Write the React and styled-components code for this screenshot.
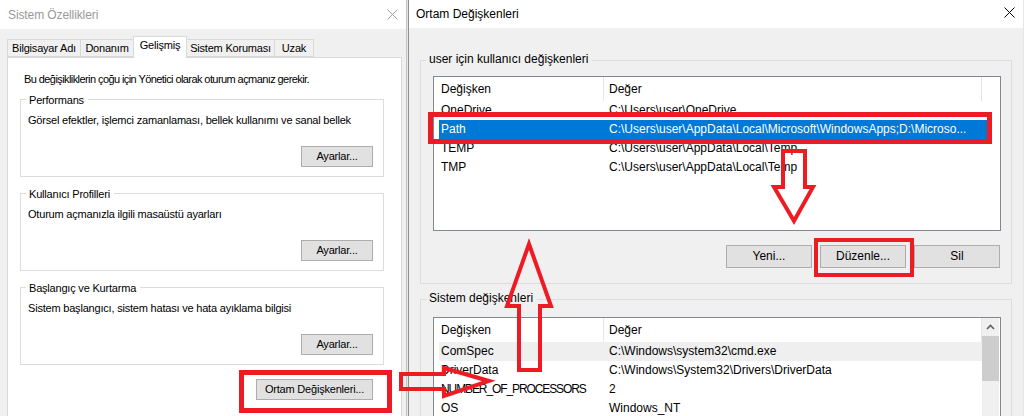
import React from 'react';
import styled, { createGlobalStyle } from 'styled-components';

const RED = '#ed1c24';

const userVars = [
  { name: 'OneDrive', value: 'C:\\Users\\user\\OneDrive' },
  {
    name: 'Path',
    value: 'C:\\Users\\user\\AppData\\Local\\Microsoft\\WindowsApps;D:\\Microso...',
    state: 'selected',
  },
  { name: 'TEMP', value: 'C:\\Users\\user\\AppData\\Local\\Temp' },
  { name: 'TMP', value: 'C:\\Users\\user\\AppData\\Local\\Temp' },
];

const systemVars = [
  { name: 'ComSpec', value: 'C:\\Windows\\system32\\cmd.exe', state: 'hover' },
  { name: 'DriverData', value: 'C:\\Windows\\System32\\Drivers\\DriverData' },
  { name: 'NUMBER_OF_PROCESSORS', value: '2', tight: true },
  { name: 'OS', value: 'Windows_NT' },
];

const tabs = [
  { label: 'Bilgisayar Adı', width: 74 },
  { label: 'Donanım', width: 54 },
  { label: 'Gelişmiş', width: 54, active: true },
  { label: 'Sistem Koruması', width: 89 },
  { label: 'Uzak', width: 40 },
];

const settingGroups = [
  {
    title: 'Performans',
    text: 'Görsel efektler, işlemci zamanlaması, bellek kullanımı ve sanal bellek',
  },
  { title: 'Kullanıcı Profilleri', text: 'Oturum açmanızla ilgili masaüstü ayarları' },
  {
    title: 'Başlangıç ve Kurtarma',
    text: 'Sistem başlangıcı, sistem hatası ve hata ayıklama bilgisi',
  },
];

const CloseIcon = ({ color }) => (
  <svg width="11" height="11" viewBox="0 0 11 11">
    <path d="M0.5 0.5L10.5 10.5M10.5 0.5L0.5 10.5" stroke={color} strokeWidth="1" fill="none" />
  </svg>
);

const VarList = ({ rows, height, scroll }) => (
  <ListBox $h={height}>
    <ListMain>
      <HeaderRow>
        <HeaderCell $w={170} $pad={7}>Değişken</HeaderCell>
        <HeaderCell $w={378} $pad={5}>Değer</HeaderCell>
      </HeaderRow>
      {rows.map((r) => (
        <Row key={r.name} $state={r.state} $mr={scroll ? 0 : 13}>
          <NameCell $tight={r.tight}>{r.name}</NameCell>
          <ValueCell>{r.value}</ValueCell>
        </Row>
      ))}
    </ListMain>
    {scroll && (
      <ScrollBar>
        <ScrollArrow>
          <svg width="9" height="6" viewBox="0 0 9 6">
            <path d="M1 5L4.5 1.5L8 5" stroke="#606060" strokeWidth="1.6" fill="none" />
          </svg>
        </ScrollArrow>
        <Thumb />
      </ScrollBar>
    )}
  </ListBox>
);

const App = () => (
  <>
    <GlobalStyle />
    <Screen>
      <LeftWindow>
        <TitleBar $h={29}>
          <LeftTitle>Sistem Özellikleri</LeftTitle>
          <CloseIcon color="#a0a0a0" />
        </TitleBar>
        <LeftBody>
          <TabStrip>
            {tabs.map((t) => (
              <Tab key={t.label} $w={t.width} $active={t.active}>
                {t.label}
              </Tab>
            ))}
          </TabStrip>
          <Panel>
            <Intro>Bu değişikliklerin çoğu için Yönetici olarak oturum açmanız gerekir.</Intro>
            {settingGroups.map((g) => (
              <SettingGroup key={g.title}>
                <Legend $top={-7} $left={5} $bg="#fff">
                  {g.title}
                </Legend>
                <Desc>{g.text}</Desc>
                <ButtonRow>
                  <Button $w={72} $h={21}>
                    Ayarlar...
                  </Button>
                </ButtonRow>
              </SettingGroup>
            ))}
            <FooterRow>
              <Button $w={117} $h={21}>
                Ortam Değişkenleri...
              </Button>
            </FooterRow>
          </Panel>
        </LeftBody>
      </LeftWindow>

      <RightWindow>
        <TitleBar $h={28}>
          <RightTitle>Ortam Değişkenleri</RightTitle>
          <CloseSlot>
            <CloseIcon color="#000" />
          </CloseSlot>
        </TitleBar>
        <RightBody>
          <VarGroup $pt={15} $pb={15}>
            <Legend $top={-9} $left={5} $bg="#f0f0f0">
              user için kullanıcı değişkenleri
            </Legend>
            <VarList rows={userVars} height={155} />
            <ActionRow>
              <Button $w={86} $h={23}>
                Yeni...
              </Button>
              <Button $w={86} $h={23}>
                Düzenle...
              </Button>
              <Button $w={86} $h={23}>
                Sil
              </Button>
            </ActionRow>
          </VarGroup>
          <VarGroup $pt={17} $pb={0} $mt={15}>
            <Legend $top={-9} $left={5} $bg="#f0f0f0">
              Sistem değişkenleri
            </Legend>
            <VarList rows={systemVars} height={160} scroll />
          </VarGroup>
        </RightBody>
      </RightWindow>

      <Overlay width="1024" height="416" viewBox="0 0 1024 416">
        <g fill="none" stroke={RED} strokeLinejoin="miter">
          <rect x="430.5" y="114.5" width="559" height="27" strokeWidth="5" />
          <rect x="816" y="240" width="96" height="35" strokeWidth="4" />
          <rect x="241.5" y="372.5" width="148" height="38" strokeWidth="5" />
          <polygon
            points="401,374 444,374 444,368 489,381 444,396 444,389 401,389"
            strokeWidth="4"
          />
          <polygon
            points="529,244 551,306 540,306 540,370 519,370 519,306 507,306"
            strokeWidth="4"
          />
          <polygon
            points="783,151 805,151 805,187 813,187 794,221 774,187 783,187"
            strokeWidth="4"
          />
        </g>
      </Overlay>
    </Screen>
  </>
);

const GlobalStyle = createGlobalStyle`
  html, body {
    margin: 0;
    padding: 0;
    background: #f0f0f0;
  }
  body {
    font-family: "Liberation Sans", Arial, sans-serif;
    color: #000;
  }
`;

const Screen = styled.div`
  position: relative;
  display: flex;
  width: 1024px;
  height: 416px;
  overflow: hidden;
  background: #e6e6e6;
`;

const LeftWindow = styled.section`
  flex: none;
  width: 407px;
  display: flex;
  flex-direction: column;
  box-sizing: border-box;
  background: #f0f0f0;
  border-right: 1px solid #c4c4c4;
  font-size: 11px;
  letter-spacing: -0.2px;
`;

const TitleBar = styled.div`
  flex: none;
  height: ${(p) => p.$h}px;
  display: flex;
  align-items: center;
  justify-content: space-between;
  padding: 0 8px 0 7px;
  box-sizing: border-box;
  background: #fff;
`;

const LeftTitle = styled.span`
  font-size: 12px;
  letter-spacing: -0.1px;
  color: #999;
  padding-left: 1px;
`;

const RightTitle = styled.span`
  font-size: 12px;
  padding-bottom: 1px;
`;

const CloseSlot = styled.span`
  display: flex;
  padding-bottom: 4px;
`;

const LeftBody = styled.div`
  flex: 1;
  padding: 7px 4px 0 7px;
`;

const TabStrip = styled.div`
  position: relative;
  z-index: 1;
  display: flex;
  align-items: flex-end;
  height: 21px;
`;

const Tab = styled.div`
  flex: none;
  width: ${(p) => p.$w}px;
  height: ${(p) => (p.$active ? 22 : 18)}px;
  margin-right: -1px;
  margin-bottom: ${(p) => (p.$active ? -1 : 0)}px;
  display: flex;
  align-items: ${(p) => (p.$active ? 'flex-start' : 'center')};
  justify-content: center;
  padding-top: ${(p) => (p.$active ? 1 : 0)}px;
  box-sizing: border-box;
  border: 1px solid #d9d9d9;
  border-bottom: ${(p) => (p.$active ? 'none' : '1px solid #d9d9d9')};
  background: ${(p) => (p.$active ? '#fff' : '#f0f0f0')};
  line-height: 15px;
  white-space: nowrap;
`;

const Panel = styled.div`
  width: 395px;
  height: 400px;
  box-sizing: border-box;
  padding: 14px 0 0 12px;
  background: #fff;
  border: 1px solid #d9d9d9;
  line-height: 15px;
`;

const Intro = styled.div`
  margin-left: 4px;
  letter-spacing: -0.58px;
  white-space: nowrap;
`;

const SettingGroup = styled.div`
  position: relative;
  width: 364px;
  margin-top: 12px;
  box-sizing: border-box;
  padding: 13px 10px 9px 7px;
  border: 1px solid #dcdcdc;

  & + & {
    margin-top: 16px;
  }
`;

const Legend = styled.span`
  position: absolute;
  top: ${(p) => p.$top}px;
  left: ${(p) => p.$left}px;
  padding: 0 4px 0 3px;
  background: ${(p) => p.$bg};
  line-height: 15px;
  white-space: nowrap;
`;

const Desc = styled.div`
  white-space: nowrap;
`;

const ButtonRow = styled.div`
  display: flex;
  justify-content: flex-end;
  margin-top: 18px;
`;

const FooterRow = styled.div`
  width: 364px;
  box-sizing: border-box;
  display: flex;
  justify-content: flex-end;
  padding-right: 11px;
  margin-top: 14px;
`;

const Button = styled.button`
  width: ${(p) => p.$w}px;
  height: ${(p) => p.$h}px;
  padding: 0;
  box-sizing: border-box;
  background: #e1e1e1;
  border: 1px solid #adadad;
  border-radius: 0;
  color: #000;
  font: inherit;
  letter-spacing: inherit;
  line-height: 15px;
  white-space: nowrap;
`;

const RightWindow = styled.section`
  flex: none;
  width: 615px;
  margin-left: 1px;
  display: flex;
  flex-direction: column;
  box-sizing: border-box;
  background: #f0f0f0;
  border-left: 1px solid #8f8f8f;
  font-size: 12px;
`;

const RightBody = styled.div`
  flex: 1;
  padding: 32px 0 0 11px;
  line-height: 15px;
`;

const VarGroup = styled.div`
  position: relative;
  width: 592px;
  margin-top: ${(p) => p.$mt || 0}px;
  box-sizing: border-box;
  padding: ${(p) => p.$pt}px 10px ${(p) => p.$pb}px 12px;
  border: 1px solid #dcdcdc;
`;

const ListBox = styled.div`
  display: flex;
  height: ${(p) => p.$h}px;
  box-sizing: border-box;
  background: #fff;
  border: 1px solid #828790;
  overflow: hidden;
`;

const ListMain = styled.div`
  flex: 1;
  min-width: 0;
`;

const HeaderRow = styled.div`
  display: flex;
  height: 24px;
`;

const HeaderCell = styled.div`
  flex: none;
  width: ${(p) => p.$w}px;
  display: flex;
  align-items: center;
  box-sizing: border-box;
  padding-left: ${(p) => p.$pad}px;
  border-right: 1px solid #e5e5e5;
`;

const Row = styled.div`
  display: flex;
  align-items: center;
  height: 19px;
  margin: 0 ${(p) => p.$mr}px 0 5px;
  background: ${(p) =>
    p.$state === 'selected' ? '#0078d7' : p.$state === 'hover' ? '#efefef' : 'transparent'};
  color: ${(p) => (p.$state === 'selected' ? '#fff' : '#000')};
  white-space: nowrap;
`;

const NameCell = styled.div`
  flex: none;
  width: 164px;
  box-sizing: border-box;
  padding-left: 2px;
  letter-spacing: ${(p) => (p.$tight ? '-1.1px' : 'normal')};
  overflow: hidden;
`;

const ValueCell = styled.div`
  flex: 1;
  min-width: 0;
  padding-left: 6px;
  overflow: hidden;
`;

const ActionRow = styled.div`
  display: flex;
  justify-content: flex-end;
  gap: 8px;
  margin-top: 14px;
  padding-right: 1px;
`;

const ScrollBar = styled.div`
  flex: none;
  width: 17px;
  margin-right: 1px;
  display: flex;
  flex-direction: column;
  background: #f0f0f0;
`;

const ScrollArrow = styled.div`
  height: 18px;
  display: flex;
  align-items: center;
  justify-content: center;
`;

const Thumb = styled.div`
  height: 45px;
  background: #cdcdcd;
`;

const Overlay = styled.svg`
  position: absolute;
  left: 0;
  top: 0;
  pointer-events: none;
`;

export default App;
